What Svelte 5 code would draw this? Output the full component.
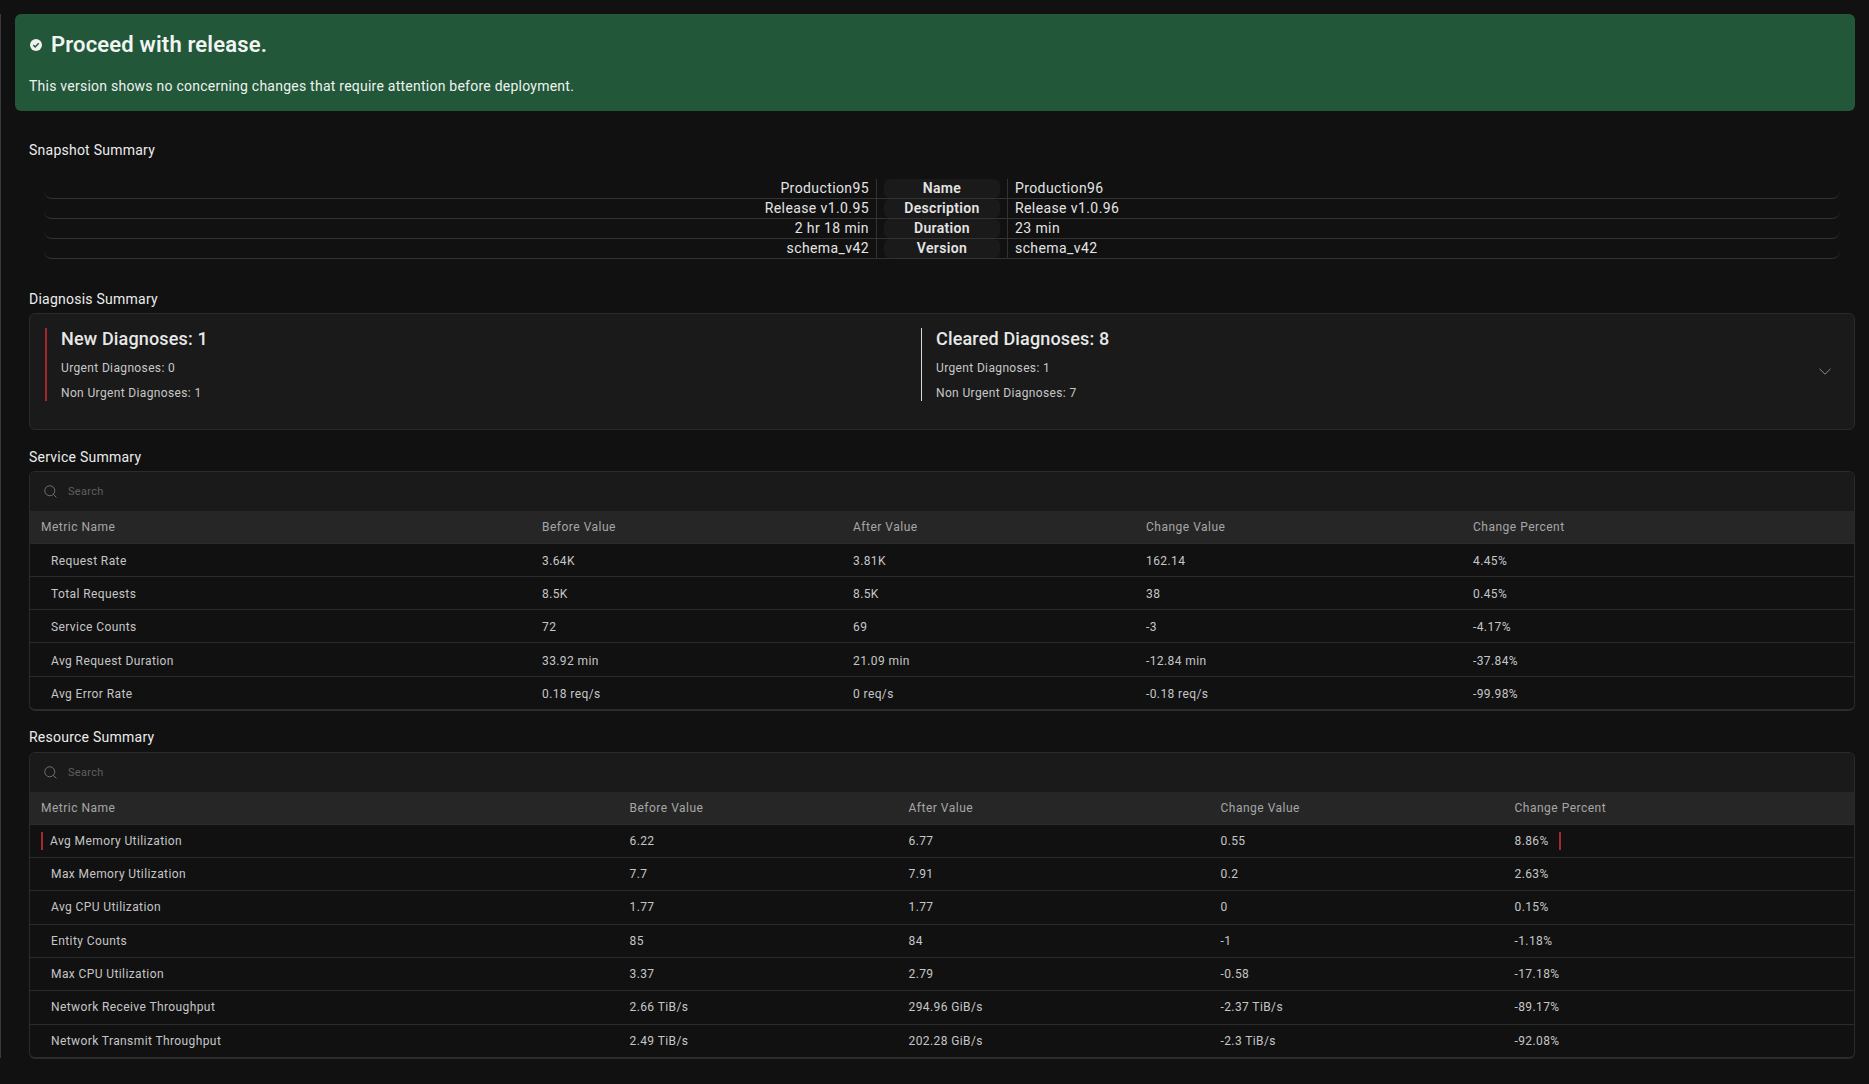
<script>
  const snapshot = [
    ['Production95', 'Name', 'Production96'],
    ['Release v1.0.95', 'Description', 'Release v1.0.96'],
    ['2 hr 18 min', 'Duration', '23 min'],
    ['schema_v42', 'Version', 'schema_v42']
  ];
  const head = ['Metric Name', 'Before Value', 'After Value', 'Change Value', 'Change Percent'];
  const service = [
    ['Request Rate', '3.64K', '3.81K', '162.14', '4.45%'],
    ['Total Requests', '8.5K', '8.5K', '38', '0.45%'],
    ['Service Counts', '72', '69', '-3', '-4.17%'],
    ['Avg Request Duration', '33.92 min', '21.09 min', '-12.84 min', '-37.84%'],
    ['Avg Error Rate', '0.18 req/s', '0 req/s', '-0.18 req/s', '-99.98%']
  ];
  const resource = [
    ['Avg Memory Utilization', '6.22', '6.77', '0.55', '8.86%'],
    ['Max Memory Utilization', '7.7', '7.91', '0.2', '2.63%'],
    ['Avg CPU Utilization', '1.77', '1.77', '0', '0.15%'],
    ['Entity Counts', '85', '84', '-1', '-1.18%'],
    ['Max CPU Utilization', '3.37', '2.79', '-0.58', '-17.18%'],
    ['Network Receive Throughput', '2.66 TiB/s', '294.96 GiB/s', '-2.37 TiB/s', '-89.17%'],
    ['Network Transmit Throughput', '2.49 TiB/s', '202.28 GiB/s', '-2.3 TiB/s', '-92.08%']
  ];
  const tables = [
    { title: 'Service Summary', cls: 'svc', rows: service, flagged: -1 },
    { title: 'Resource Summary', cls: 'res', rows: resource, flagged: 0 }
  ];
</script>

<div class="page">
  <main class="main">
    <section class="banner">
      <h1 class="banner-title">
        <svg class="check" viewBox="0 0 16 16" width="12" height="12" aria-hidden="true">
          <circle cx="8" cy="8" r="8" fill="#f0f0f0" />
          <path d="M4.4 8.2 7 10.6l4.6-5" fill="none" stroke="#22573a" stroke-width="2" />
        </svg>
        Proceed with release.
      </h1>
      <p class="banner-text">This version shows no concerning changes that require attention before deployment.</p>
    </section>

    <div class="content">
      <h2 class="title snap-title">Snapshot Summary</h2>
      <div class="snapshot">
        {#each snapshot as row}
          <div class="snap-row">
            <div class="snap-left">{row[0]}</div>
            <div class="snap-mid"><span>{row[1]}</span></div>
            <div class="snap-right">{row[2]}</div>
          </div>
        {/each}
      </div>

      <h2 class="title diag-title">Diagnosis Summary</h2>
      <div class="diag">
        <div class="diag-col">
          <div class="diag-bar red"></div>
          <div>
            <h3>New Diagnoses: 1</h3>
            <p>Urgent Diagnoses: 0</p>
            <p>Non Urgent Diagnoses: 1</p>
          </div>
        </div>
        <div class="diag-col">
          <div class="diag-bar white"></div>
          <div>
            <h3>Cleared Diagnoses: 8</h3>
            <p>Urgent Diagnoses: 1</p>
            <p>Non Urgent Diagnoses: 7</p>
          </div>
        </div>
        <svg class="chevron" viewBox="0 0 12 7" width="12" height="7" aria-hidden="true">
          <path d="M.5.8 6 6.2 11.5.8" fill="none" stroke="#8a8a8a" stroke-width="1" />
        </svg>
      </div>

      {#each tables as t}
        <h2 class="title tbl-title">{t.title}</h2>
        <div class="card {t.cls}">
          <div class="search">
            <svg viewBox="0 0 14 14" width="13" height="13" aria-hidden="true">
              <circle cx="6.2" cy="6.2" r="5.4" fill="none" stroke="#777" stroke-width="1" />
              <path d="m10 10 3.4 3.4" stroke="#777" stroke-width="1" fill="none" />
            </svg>
            <span>Search</span>
          </div>
          <div class="row head">
            {#each head as h}<div class="cell">{h}</div>{/each}
          </div>
          {#each t.rows as r, i}
            <div class="row body">
              {#each r as c, j}
                <div class="cell" class:first={j === 0} class:flagged={i === t.flagged && j === 0}>
                  {#if i === t.flagged && j === 0}<i class="flag flag-l"></i>{/if}{c}{#if i === t.flagged && j === 4}<i class="flag flag-r"></i>{/if}
                </div>
              {/each}
            </div>
          {/each}
        </div>
      {/each}
    </div>
  </main>
</div>

<style>
  :global(body) {
    margin: 0;
    background: #111112;
    color: #e6e6e6;
    font-family: Roboto, "Noto Sans", sans-serif;
  }
  .page { width: 1869px; height: 1084px; overflow: hidden; box-sizing: border-box; padding-top: 14px; }
  .main { border-left: 1px solid #3a3a3a; height: 1044px; box-sizing: border-box; padding: 0 14px 0 14px; }
  .banner { background: #22573a; border-radius: 6px; height: 97px; box-sizing: border-box; padding: 16px 16px 0 14px; }
  .banner-title { margin: 0; display: flex; align-items: center; gap: 9px; font-size: 22px; line-height: 30px; font-weight: 600; letter-spacing: .17px; color: #f1f5f2; }
  .check { margin-left: 1px; }
  .banner-text { margin: 16px 0 0; font-size: 14px; line-height: 20px; letter-spacing: .24px; color: #eef3ef; }
  .content { padding-left: 14px; }
  .title { margin: 0; font-size: 14px; line-height: 20px; font-weight: 400; letter-spacing: .24px; color: #ececec; }
  .snap-title { margin-top: 29px; }
  .snapshot { margin: 19px 0 0 15px; width: 1796px; }
  .snap-row { display: grid; grid-template-columns: 833px 131px 1fr; border-bottom: 1px solid #333; border-radius: 0 0 8px 8px; box-sizing: border-box; height: 20px; font-size: 14px; line-height: 19px; letter-spacing: .4px; color: #e4e4e4; }
  .snap-left { text-align: right; padding-right: 7px; border-right: 1px solid #333; }
  .snap-mid { text-align: center; padding: 0 7px; border-right: 1px solid #333; font-weight: 600; letter-spacing: .33px; }
  .snap-mid span { display: block; background: #1a1a1a; border-radius: 6px; }
  .snap-right { padding-left: 7px; }
  .diag-title { margin-top: 30px; }
  .diag { margin-top: 4px; height: 117px; background: #1a1a1a; border: 1px solid #2b2b2b; border-radius: 6px; box-sizing: border-box; display: grid; grid-template-columns: 875px 1fr; padding: 14px 0 0 15px; position: relative; }
  .diag-col { display: flex; gap: 14px; align-items: flex-start; }
  .diag-col:last-of-type .diag-bar { margin-left: 1px; }
  .diag-bar { width: 2px; height: 73px; flex: none; }
  .red { background: #a5282f; }
  .white { background: #d9d9d9; width: 1px; }
  .diag h3 { margin: -1px 0 0; font-size: 18px; line-height: 24px; font-weight: 500; letter-spacing: .16px; color: #e8e8e8; }
  .diag p { margin: 0; font-size: 12px; line-height: 25px; letter-spacing: .36px; color: #c8c8c8; }
  .diag h3 + p { margin-top: 5px; }
  .chevron { position: absolute; right: 23px; top: 54px; }
  .tbl-title { margin-top: 17px; }
  .res.card { margin-top: 5px; }
  .card { margin-top: 4px; border: 1px solid #2b2b2b; border-bottom-width: 2px; border-radius: 6px; overflow: hidden; background: #111112; }
  .card + .tbl-title { margin-top: 16px; }
  .search { height: 39px; background: #1a1a1a; display: flex; align-items: center; gap: 11px; padding-left: 14px; font-size: 11px; letter-spacing: .3px; color: #5f5f5f; }
  .row { display: grid; font-size: 12px; letter-spacing: .4px; }
  .svc .row { grid-template-columns: 512px 311px 293px 327px 1fr; }
  .res .row { grid-template-columns: 599.5px 279px 312px 294px 1fr; }
  .head { height: 31.5px; background: #262626; color: #a6a6a6; align-items: center; letter-spacing: .5px; }
  .body { height: 33.33px; box-sizing: border-box; border-top: 1px solid #2b2b2b; align-items: center; color: #c6c6c6; }
  .svc .body .cell { padding-top: 2px; }
  .cell { display: flex; align-items: center; }
  .head .cell:first-child { padding-left: 11px; }
  .body .first { padding-left: 21px; position: relative; }
  .body .flagged { padding-left: 20px; }
  .flag { display: inline-block; width: 2px; height: 18px; background: #a5282f; }
  .flag-l { position: absolute; left: 11px; }
  .flag-r { margin-left: 10px; }
</style>
